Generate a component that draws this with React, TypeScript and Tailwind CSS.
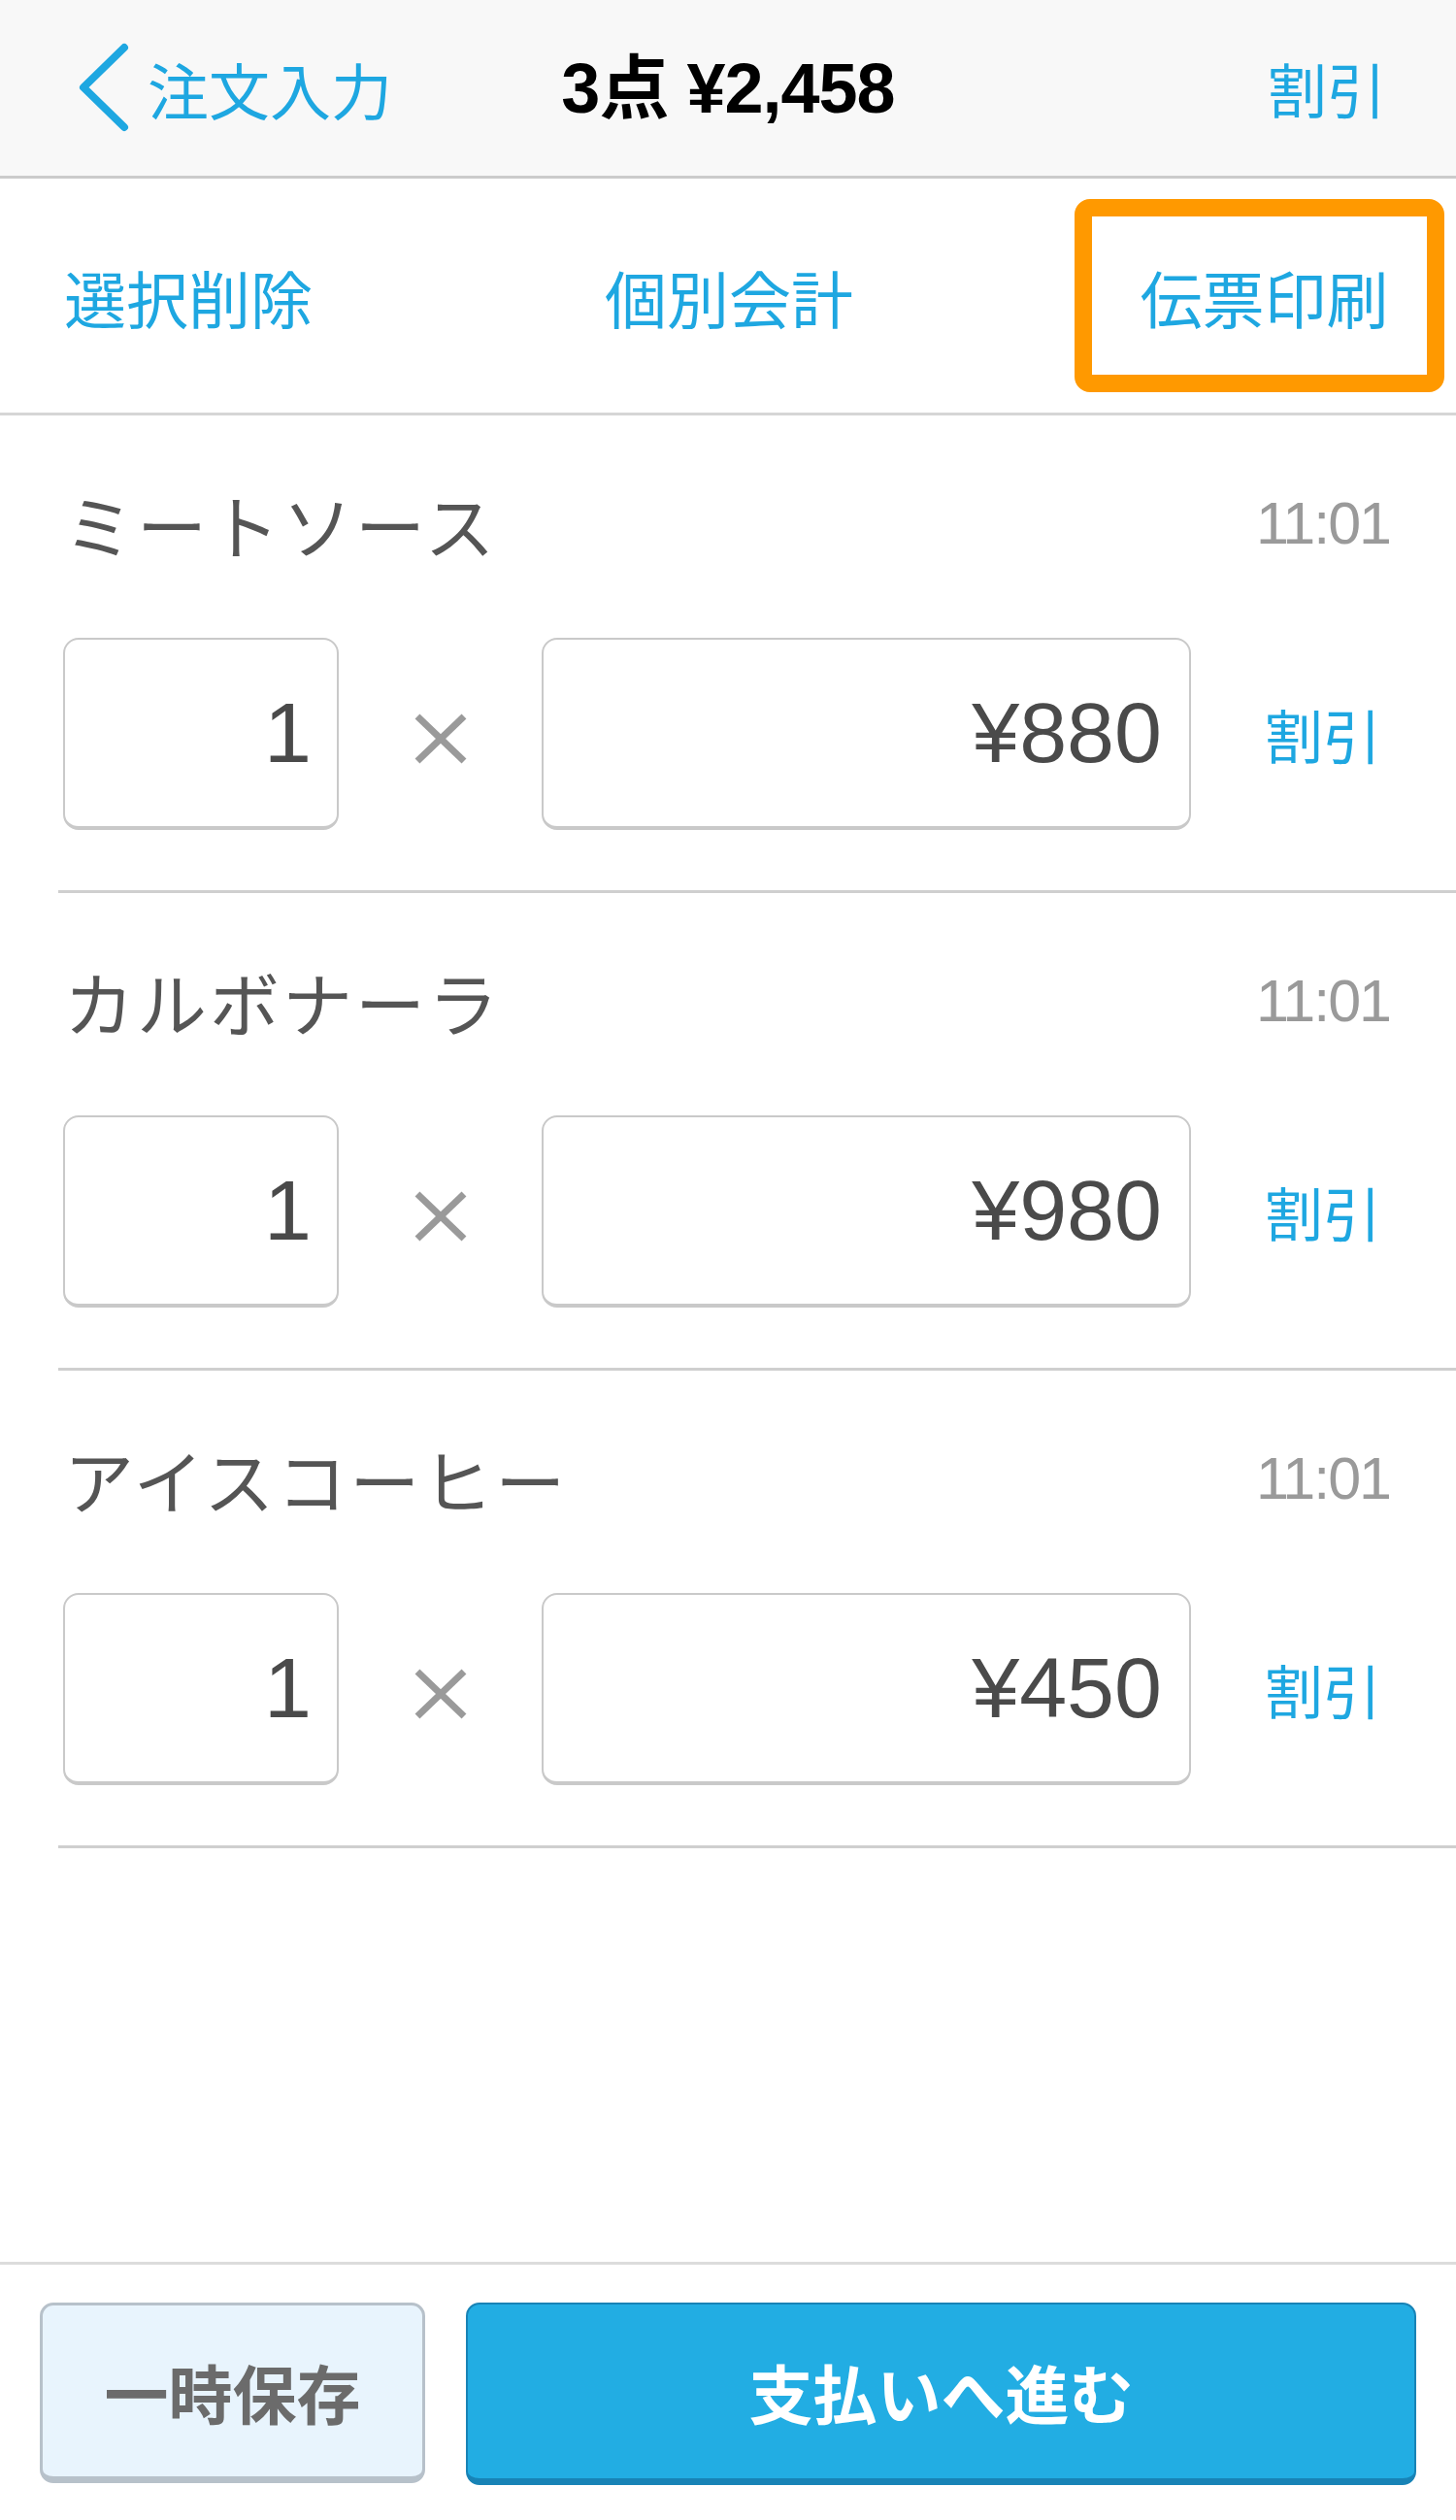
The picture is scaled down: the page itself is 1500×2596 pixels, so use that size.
import { Fragment } from 'react';

const jp = { fontFamily: "'Noto Sans CJK JP', sans-serif" };
const num = { fontFamily: "'Liberation Sans', 'Noto Sans CJK JP', sans-serif" };

const items = [
    { name: 'ミートソース', time: '11:01', qty: 1, price: '¥880' },
    { name: 'カルボナーラ', time: '11:01', qty: 1, price: '¥980' },
    { name: 'アイスコーヒー', time: '11:01', qty: 1, price: '¥450' },
];

function TimesMark() {
    return (
        <svg width="54" height="52" viewBox="0 0 54 52" fill="none" stroke="#9a9a9a" strokeWidth="7">
            <line x1="3" y1="3" x2="51" y2="49" />
            <line x1="51" y1="3" x2="3" y2="49" />
        </svg>
    );
}

export default function App() {
    return (
        <div className="min-h-[2596px] w-[1500px] flex flex-col bg-white" style={jp}>
            {/* Nav bar */}
            <div className="h-[184px] grid grid-cols-[1fr_auto_1fr] items-center bg-[#f8f8f8] border-b-[3px] border-[#cbcbcb]">
                <div className="flex items-center pl-[80px]">
                    <svg width="56" height="96" viewBox="0 0 56 96" fill="none" stroke="#1ea7e1" strokeWidth="8" strokeLinecap="round" strokeLinejoin="round">
                        <path d="M48 6 L6 47 L48 88" />
                    </svg>
                    <span className="ml-[16px] text-[63px] leading-none text-[#1ea7e1]">注文入力</span>
                </div>
                <div className="text-[72px] leading-none font-bold text-black tracking-[-1px]" style={num}>
                    3点 ¥2,458
                </div>
                <div className="flex justify-end pr-[72px]">
                    <span className="text-[61px] leading-none text-[#1ea7e1]">割引</span>
                </div>
            </div>

            {/* Action bar */}
            <div className="h-[244px] flex items-center border-b-[3px] border-[#d6d6d6] text-[64px] leading-none text-[#1ea7e1]">
                <span className="ml-[66px]">選択削除</span>
                <span className="ml-[301px]">個別会計</span>
                <div className="ml-auto mr-[12px] w-[381px] h-[199px] flex items-center justify-center border-[18px] border-[#ff9900] rounded-[16px]">
                    <span className="ml-[10px]">伝票印刷</span>
                </div>
            </div>

            {/* Order lines */}
            {items.map((item) => (
                <Fragment key={item.name}>
                    <div className="pt-[61px] pb-[62px]">
                        <div className="h-[100px] flex items-center justify-between pl-[66px] pr-[68px]">
                            <span className="text-[72px] leading-none text-[#555555] tracking-[3px]">{item.name}</span>
                            <span className="text-[61px] leading-none text-[#9a9a9a] tracking-[-2px]" style={num}>
                                {item.time}
                            </span>
                        </div>
                        <div className="mt-[68px] flex items-center pl-[65px]">
                            <div className="w-[284px] h-[198px] flex items-center justify-end pr-[26px] border-2 border-b-[4px] border-[#c9c9c9] rounded-[16px]">
                                <span className="text-[88px] leading-none text-[#4a4a4a]" style={num}>{item.qty}</span>
                            </div>
                            <div className="w-[209px] flex justify-center pt-[10px]">
                                <TimesMark />
                            </div>
                            <div className="w-[669px] h-[198px] flex items-center justify-end pr-[28px] border-2 border-b-[4px] border-[#c9c9c9] rounded-[16px]">
                                <span className="text-[88px] leading-none text-[#4a4a4a]" style={num}>{item.price}</span>
                            </div>
                            <span className="ml-[76px] text-[60px] leading-none text-[#1ea7e1]">割引</span>
                        </div>
                    </div>
                    <div className="ml-[60px] h-[3px] bg-[#cfcfcf]" />
                </Fragment>
            ))}

            <div className="flex-1" />

            {/* Footer */}
            <div className="border-t-[3px] border-[#dcdcdc] pt-[39px] pb-[36px] pl-[41px] flex gap-[42px]">
                <button className="w-[397px] h-[186px] flex items-center justify-center bg-[#e8f4fd] border-[3px] border-b-[7px] border-[#b7c1ca] rounded-[14px] text-[66px] font-bold text-[#6b6b6b]">
                    一時保存
                </button>
                <button className="w-[979px] h-[188px] flex items-center justify-center bg-[#22ade3] border-[2px] border-b-[7px] border-[#1883b6] rounded-[14px] text-[66px] font-bold text-white">
                    支払いへ進む
                </button>
            </div>
        </div>
    );
}
